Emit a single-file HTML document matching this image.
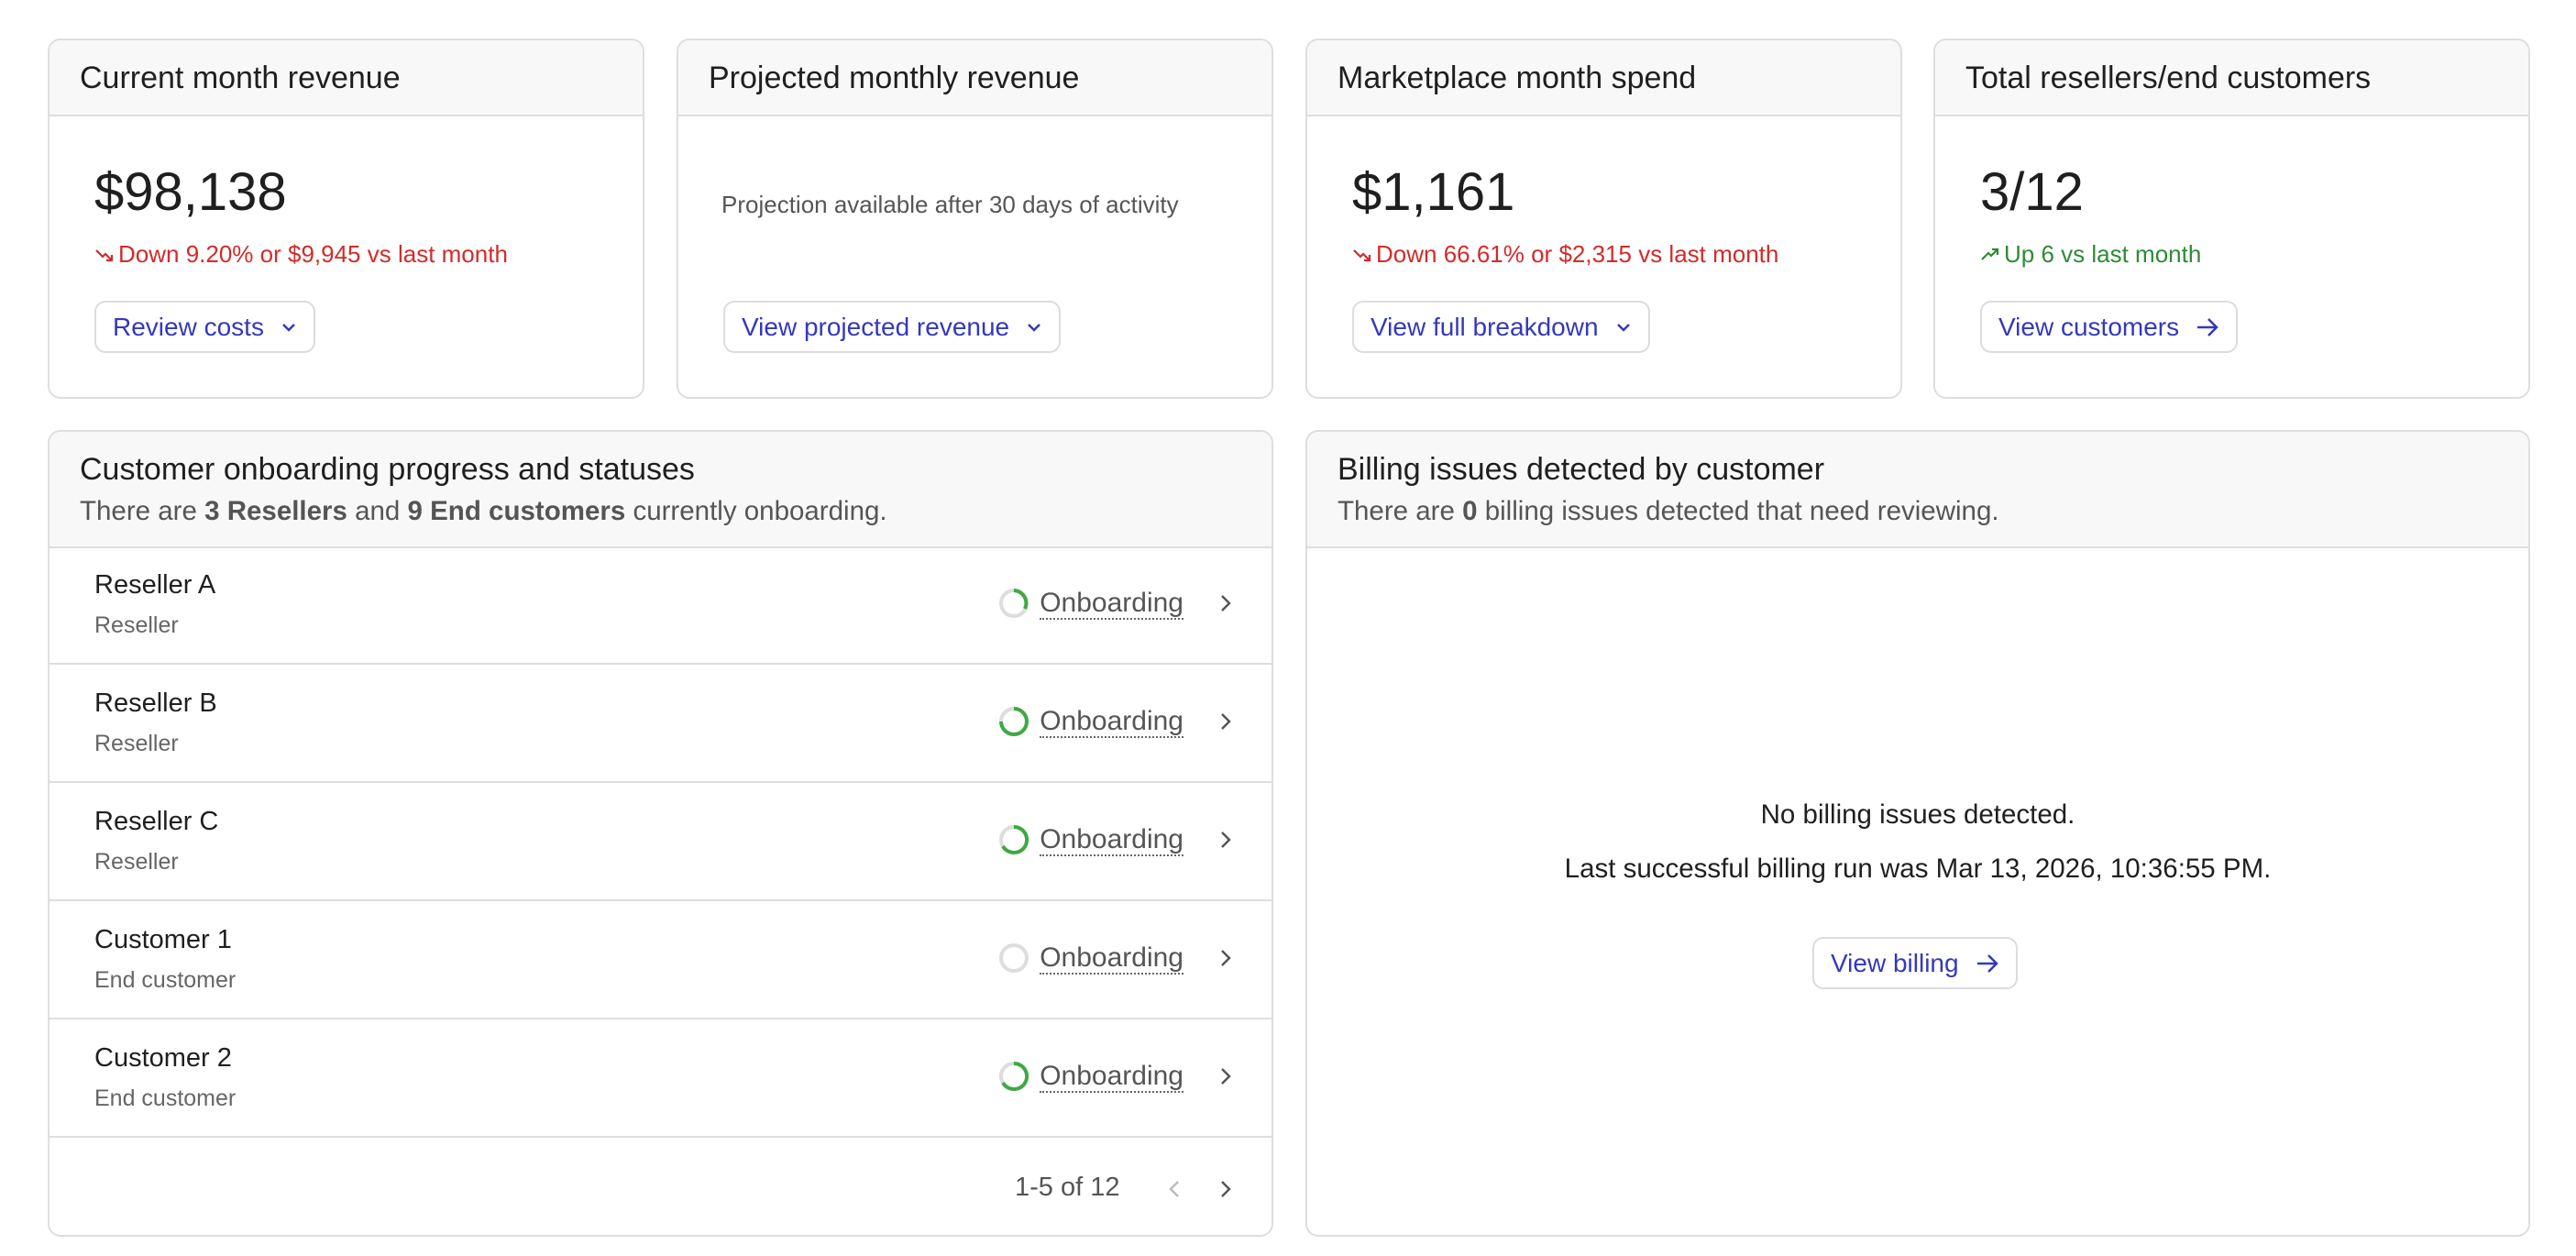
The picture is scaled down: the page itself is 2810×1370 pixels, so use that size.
<!DOCTYPE html>
<html><head><meta charset="utf-8">
<style>
*{box-sizing:border-box;margin:0;padding:0}
body{width:2810px;height:1370px;background:#fff;font-family:"Liberation Sans",sans-serif;color:#1f1f1f;position:relative;overflow:hidden}
.card{position:absolute;border:2px solid #dedede;border-radius:14px;background:#fff;overflow:hidden}
.hd{background:#f8f8f8;border-bottom:2px solid #dedede;padding:0 33px;position:relative}
.t{font-size:34px;color:#1f1f1f}
.big{position:absolute;left:49px;top:132px;font-size:58px;color:#1f1f1f}
.trend{position:absolute;left:49px;top:218px;font-size:26px;display:flex;align-items:center;gap:4px}
.red{color:#d42a2a}.green{color:#2f8a36}
.btn{position:absolute;border:2px solid #dcdcdc;border-radius:12px;height:57px;display:flex;align-items:center;padding:0 18px;font-size:28px;color:#3438bd;gap:18px;background:#fff}
.row{position:absolute;left:0;right:0;height:129px;border-bottom:2px solid #dedede}
.nm{position:absolute;left:49px;top:26px;font-size:29px;color:#1f1f1f}
.sb{position:absolute;left:49px;top:72px;font-size:25px;color:#666}
.st{position:absolute;right:96px;top:44px;display:flex;align-items:center;gap:10px}
.ob{font-size:30px;color:#555;border-bottom:2px dotted #666;line-height:33px}
.chev{position:absolute;left:1276px;top:50px}
</style></head><body>

<div class="card" style="left:52px;top:42px;width:651px;height:393px">
 <div class="hd" style="height:83px"><div class="t" style="padding-top:22px">Current month revenue</div></div>
 <div class="big">$98,138</div>
 <div class="trend red"><svg width="22" height="16" viewBox="0 0 22 16"><path d="M2 3l7 7 3-3 7 7M13 14h6v-6" fill="none" stroke="#d42a2a" stroke-width="2.2"/></svg>Down 9.20% or $9,945 vs last month</div>
 <div class="btn" style="left:49px;top:284px">Review costs <svg width="18" height="12" viewBox="0 0 18 12"><path d="M3 3l6 6 6-6" fill="none" stroke="#3438bd" stroke-width="2.5"/></svg></div>
</div>

<div class="card" style="left:738px;top:42px;width:651px;height:393px">
 <div class="hd" style="height:83px"><div class="t" style="padding-top:22px">Projected monthly revenue</div></div>
 <div style="position:absolute;left:47px;top:164px;font-size:26px;color:#555">Projection available after 30 days of activity</div>
 <div class="btn" style="left:49px;top:284px">View projected revenue <svg width="18" height="12" viewBox="0 0 18 12"><path d="M3 3l6 6 6-6" fill="none" stroke="#3438bd" stroke-width="2.5"/></svg></div>
</div>

<div class="card" style="left:1424px;top:42px;width:651px;height:393px">
 <div class="hd" style="height:83px"><div class="t" style="padding-top:22px">Marketplace month spend</div></div>
 <div class="big">$1,161</div>
 <div class="trend red"><svg width="22" height="16" viewBox="0 0 22 16"><path d="M2 3l7 7 3-3 7 7M13 14h6v-6" fill="none" stroke="#d42a2a" stroke-width="2.2"/></svg>Down 66.61% or $2,315 vs last month</div>
 <div class="btn" style="left:49px;top:284px">View full breakdown <svg width="18" height="12" viewBox="0 0 18 12"><path d="M3 3l6 6 6-6" fill="none" stroke="#3438bd" stroke-width="2.5"/></svg></div>
</div>

<div class="card" style="left:2109px;top:42px;width:651px;height:393px">
 <div class="hd" style="height:83px"><div class="t" style="padding-top:22px">Total resellers/end customers</div></div>
 <div class="big">3/12</div>
 <div class="trend green"><svg width="22" height="16" viewBox="0 0 22 16"><path d="M2 13l7-7 3 3 7-7M13 2h6v6" fill="none" stroke="#2f8a36" stroke-width="2.2"/></svg>Up 6 vs last month</div>
 <div class="btn" style="left:49px;top:284px">View customers <svg width="26" height="22" viewBox="0 0 26 22"><path d="M2 11h21M14 2l9 9-9 9" fill="none" stroke="#3438bd" stroke-width="2.5"/></svg></div>
</div>

<div class="card" style="left:52px;top:469px;width:1337px;height:880px">
 <div class="hd" style="height:127px">
  <div class="t" style="position:absolute;left:33px;top:22px">Customer onboarding progress and statuses</div>
  <div style="position:absolute;left:33px;top:70px;font-size:29.5px;color:#555">There are <b>3 Resellers</b> and <b>9 End customers</b> currently onboarding.</div>
 </div>
 <div class="row" style="top:125px"><div class="nm">Reseller A</div><div class="sb">Reseller</div>
  <div class="st"><svg width="36" height="36" viewBox="0 0 36 36"><circle cx="18" cy="18" r="14" fill="none" stroke="#ddd" stroke-width="4"/><path d="M18 4a14 14 0 0 1 12 20" fill="none" stroke="#3fa845" stroke-width="4"/></svg><span class="ob">Onboarding</span></div>
  <svg class="chev" width="14" height="24" viewBox="0 0 14 24"><path d="M3 4l8 8-8 8" fill="none" stroke="#555" stroke-width="2.5"/></svg></div>
 <div class="row" style="top:254px"><div class="nm">Reseller B</div><div class="sb">Reseller</div>
  <div class="st"><svg width="36" height="36" viewBox="0 0 36 36"><circle cx="18" cy="18" r="14" fill="none" stroke="#ddd" stroke-width="4"/><path d="M18 4a14 14 0 1 1-14 14" fill="none" stroke="#3fa845" stroke-width="4"/></svg><span class="ob">Onboarding</span></div>
  <svg class="chev" width="14" height="24" viewBox="0 0 14 24"><path d="M3 4l8 8-8 8" fill="none" stroke="#555" stroke-width="2.5"/></svg></div>
 <div class="row" style="top:383px"><div class="nm">Reseller C</div><div class="sb">Reseller</div>
  <div class="st"><svg width="36" height="36" viewBox="0 0 36 36"><circle cx="18" cy="18" r="14" fill="none" stroke="#ddd" stroke-width="4"/><path d="M18 4a14 14 0 1 1-12 21" fill="none" stroke="#3fa845" stroke-width="4"/></svg><span class="ob">Onboarding</span></div>
  <svg class="chev" width="14" height="24" viewBox="0 0 14 24"><path d="M3 4l8 8-8 8" fill="none" stroke="#555" stroke-width="2.5"/></svg></div>
 <div class="row" style="top:512px"><div class="nm">Customer 1</div><div class="sb">End customer</div>
  <div class="st"><svg width="36" height="36" viewBox="0 0 36 36"><circle cx="18" cy="18" r="14" fill="none" stroke="#ddd" stroke-width="4"/></svg><span class="ob">Onboarding</span></div>
  <svg class="chev" width="14" height="24" viewBox="0 0 14 24"><path d="M3 4l8 8-8 8" fill="none" stroke="#555" stroke-width="2.5"/></svg></div>
 <div class="row" style="top:641px"><div class="nm">Customer 2</div><div class="sb">End customer</div>
  <div class="st"><svg width="36" height="36" viewBox="0 0 36 36"><circle cx="18" cy="18" r="14" fill="none" stroke="#ddd" stroke-width="4"/><path d="M18 4a14 14 0 1 1-12 21" fill="none" stroke="#3fa845" stroke-width="4"/></svg><span class="ob">Onboarding</span></div>
  <svg class="chev" width="14" height="24" viewBox="0 0 14 24"><path d="M3 4l8 8-8 8" fill="none" stroke="#555" stroke-width="2.5"/></svg></div>
 <div style="position:absolute;left:1053px;top:808px;font-size:29px;color:#555">1-5 of 12</div>
 <svg style="position:absolute;left:1220px;top:814px" width="14" height="24" viewBox="0 0 14 24"><path d="M11 4l-8 8 8 8" fill="none" stroke="#bbb" stroke-width="2.5"/></svg>
 <svg style="position:absolute;left:1276px;top:814px" width="14" height="24" viewBox="0 0 14 24"><path d="M3 4l8 8-8 8" fill="none" stroke="#555" stroke-width="2.5"/></svg>
</div>

<div class="card" style="left:1424px;top:469px;width:1336px;height:880px">
 <div class="hd" style="height:127px">
  <div class="t" style="position:absolute;left:33px;top:22px">Billing issues detected by customer</div>
  <div style="position:absolute;left:33px;top:70px;font-size:29.5px;color:#555">There are <b>0</b> billing issues detected that need reviewing.</div>
 </div>
 <div style="position:absolute;left:0;right:0;top:401px;text-align:center;font-size:29.5px">No billing issues detected.</div>
 <div style="position:absolute;left:0;right:0;top:460px;text-align:center;font-size:29.5px">Last successful billing run was Mar 13, 2026, 10:36:55 PM.</div>
 <div class="btn" style="left:551px;top:551px">View billing <svg width="26" height="22" viewBox="0 0 26 22"><path d="M2 11h21M14 2l9 9-9 9" fill="none" stroke="#3438bd" stroke-width="2.5"/></svg></div>
</div>
</body></html>
